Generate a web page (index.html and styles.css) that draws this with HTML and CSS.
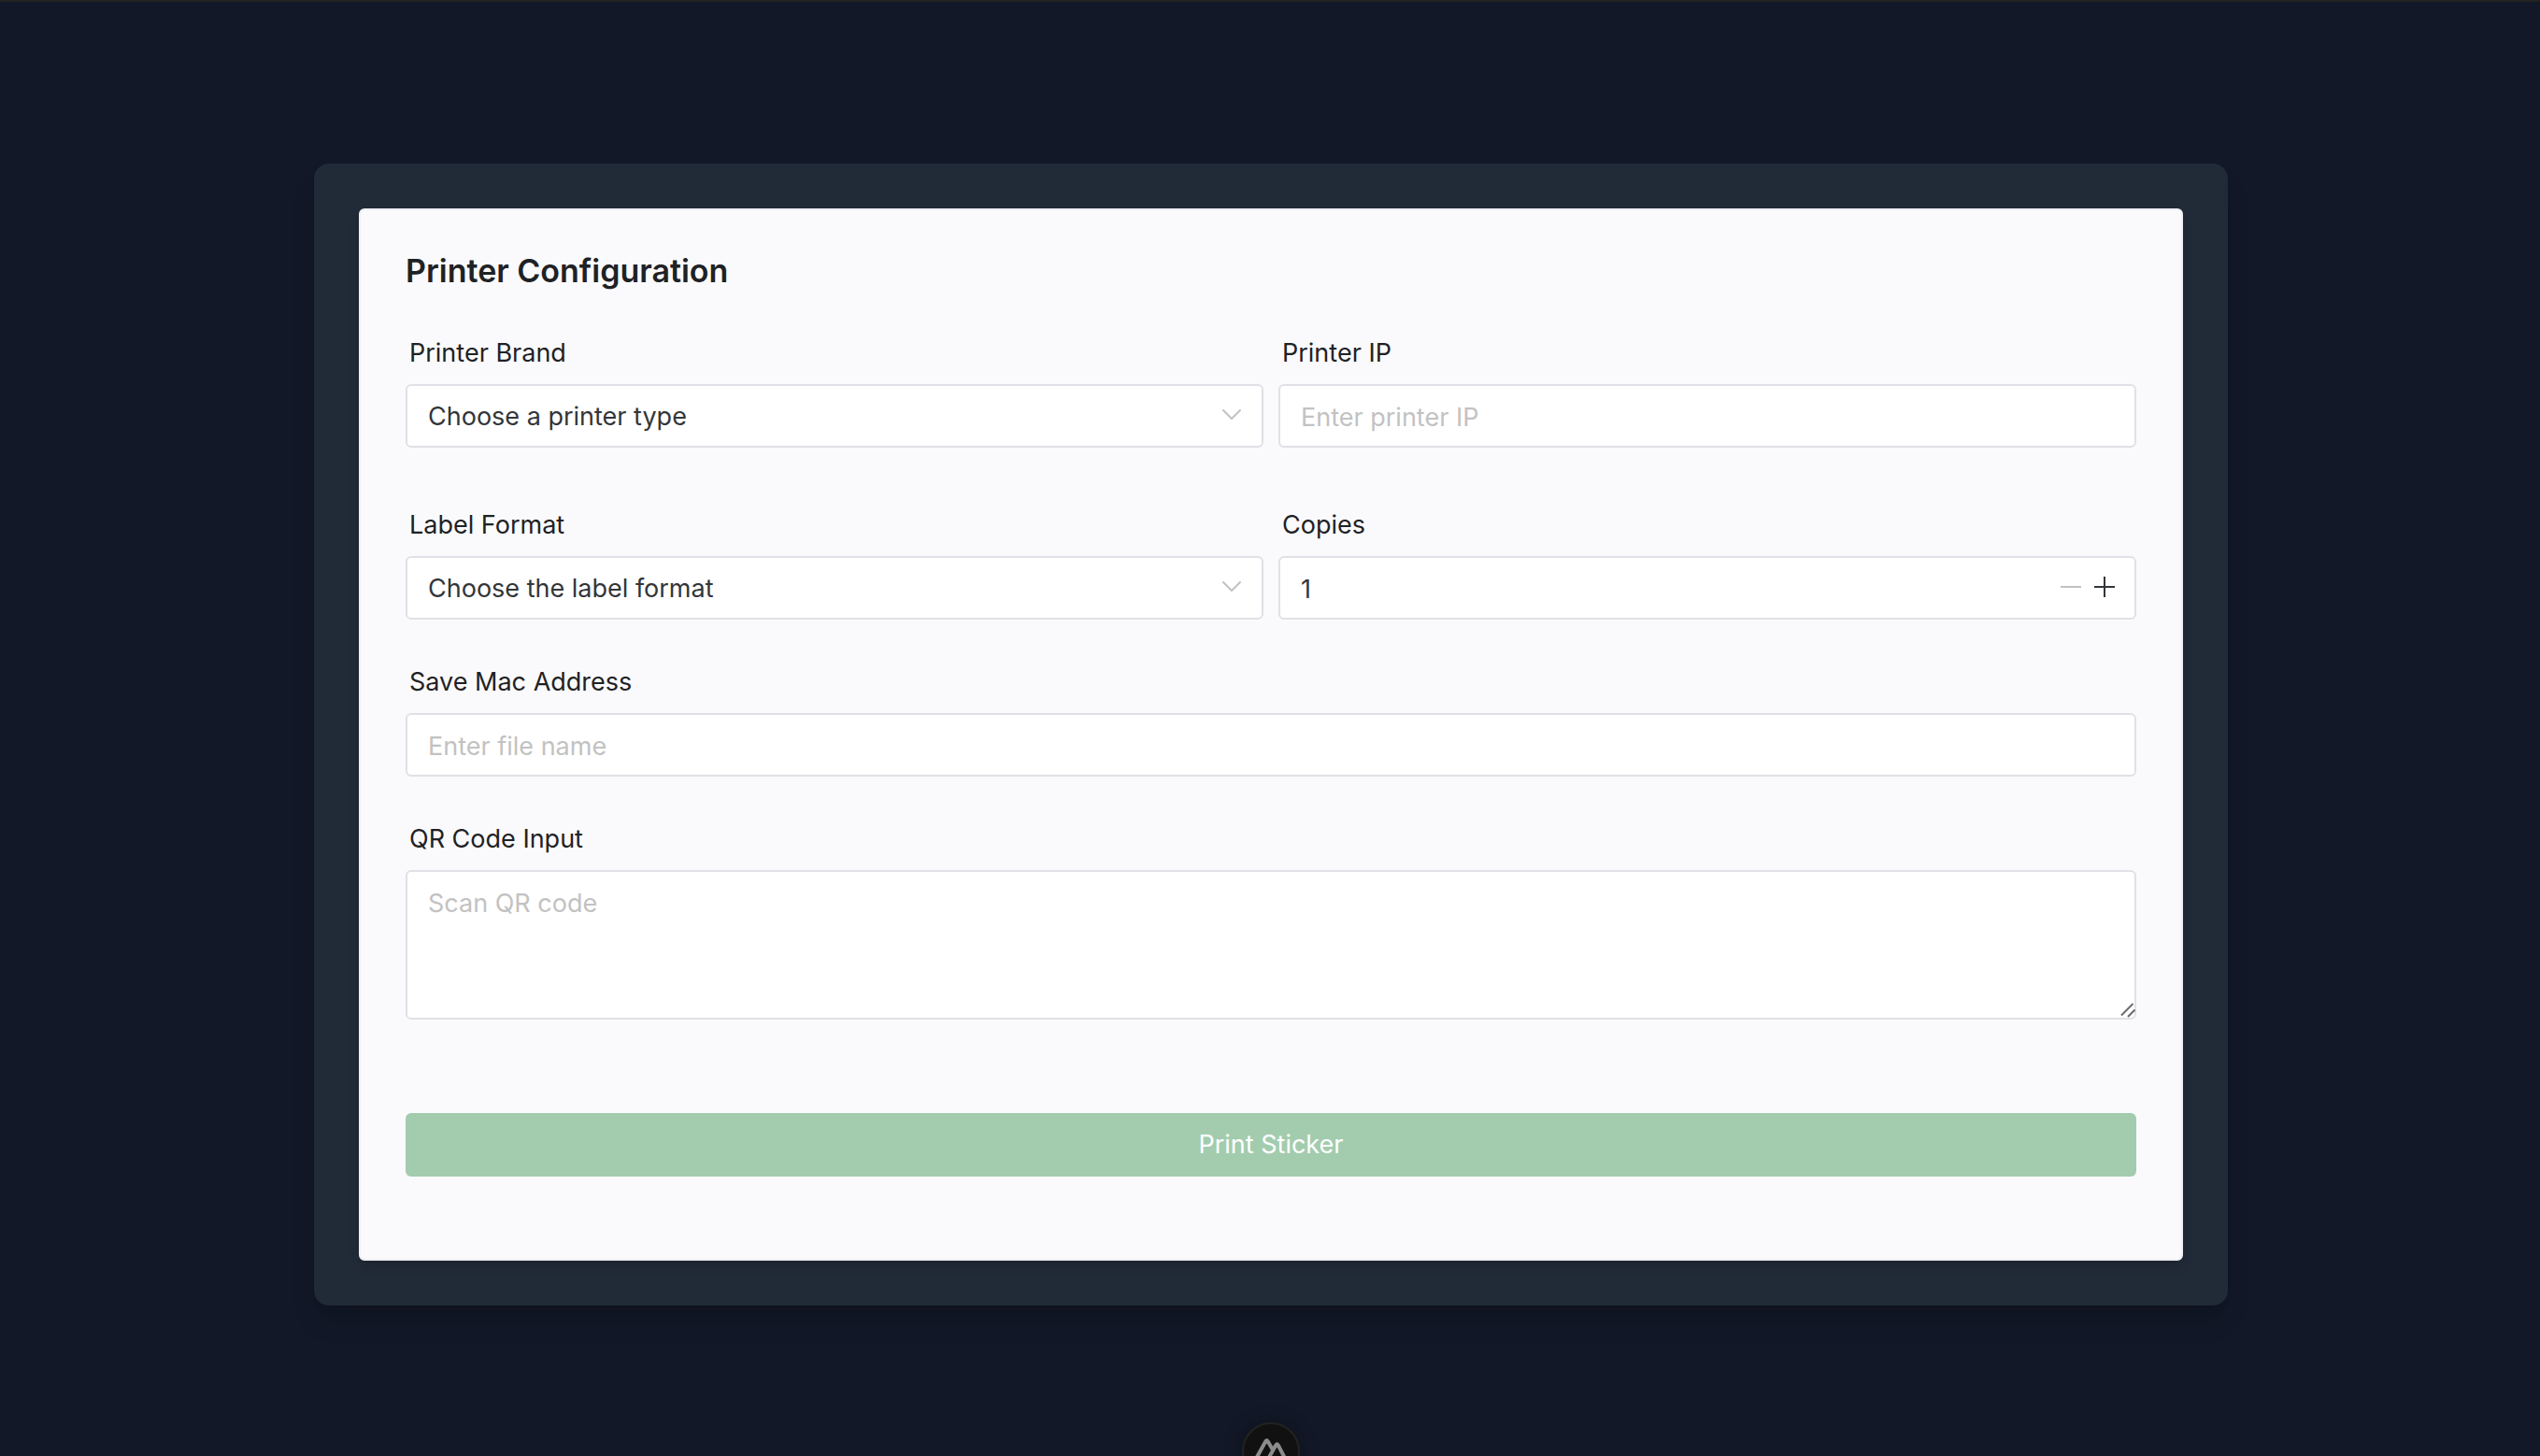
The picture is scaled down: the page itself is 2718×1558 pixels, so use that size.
FILE: index.html
```html
<!DOCTYPE html>
<html lang="en">
<head>
  <meta charset="utf-8">
  <meta name="viewport" content="width=device-width, initial-scale=1">
  <title>Printer Configuration</title>
  <link rel="stylesheet" href="styles.css">
</head>
<body>
  <main class="page">
    <div class="shell">
      <section class="card">
        <h1 class="card-title">Printer Configuration</h1>
        <form class="form">
          <div class="grid">
            <div class="field">
              <label class="label" for="brand">Printer Brand</label>
              <div class="control">
                <select class="input" id="brand">
                  <option>Choose a printer type</option>
                </select>
                <svg class="chevron" viewBox="0 0 32 32" aria-hidden="true"><path d="M7 12l9 9 9-9"/></svg>
              </div>
            </div>
            <div class="field">
              <label class="label" for="ip">Printer IP</label>
              <input class="input" id="ip" type="text" placeholder="Enter printer IP">
            </div>
            <div class="field">
              <label class="label" for="format">Label Format</label>
              <div class="control">
                <select class="input" id="format">
                  <option>Choose the label format</option>
                </select>
                <svg class="chevron" viewBox="0 0 32 32" aria-hidden="true"><path d="M7 12l9 9 9-9"/></svg>
              </div>
            </div>
            <div class="field">
              <label class="label" for="copies">Copies</label>
              <div class="control">
                <input class="input" id="copies" type="text" inputmode="numeric" value="1">
                <div class="stepper">
                  <button class="step" type="button" aria-label="Decrease copies" disabled>
                    <svg viewBox="0 0 28 28" aria-hidden="true"><path d="M3 14h22"/></svg>
                  </button>
                  <button class="step" type="button" aria-label="Increase copies">
                    <svg viewBox="0 0 28 28" aria-hidden="true"><path d="M3 14h22M14 3v22"/></svg>
                  </button>
                </div>
              </div>
            </div>
          </div>
          <div class="field">
            <label class="label" for="mac">Save Mac Address</label>
            <input class="input" id="mac" type="text" placeholder="Enter file name">
          </div>
          <div class="field">
            <label class="label" for="qr">QR Code Input</label>
            <div class="control">
              <textarea class="input input-area" id="qr" placeholder="Scan QR code"></textarea>
              <svg class="grip" viewBox="0 0 16 16" aria-hidden="true"><path d="M1 13.500L13.500 1M8 15L15.500 7.500"/></svg>
            </div>
          </div>
          <button class="submit" type="submit" disabled>Print Sticker</button>
        </form>
      </section>
    </div>
  </main>
  <button class="devtools" type="button" aria-label="Open devtools">
    <svg viewBox="0 0 36 32" aria-hidden="true"><path d="M18 25H3.500Q1.500 25 2.500 23L12.500 5Q13.500 3.500 14.500 5L20 14.500M13 25H31Q34 25 32.500 22.500L25.500 9Q24.500 7.500 23.500 9L14.500 25"/></svg>
  </button>
</body>
</html>
```

FILE: styles.css
```css
*,
*::before,
*::after {
  box-sizing: border-box;
}

body {
  margin: 0;
  min-height: 100vh;
  overflow: hidden;
  border-top: 2px solid #222320;
  background: #121827;
  color: #1f2225;
  font-family: Inter, "Noto Sans", sans-serif;
  font-size: 27px;
  line-height: 38px;
}

.page {
  padding: 173px 30px 0 32px;
}

.shell {
  max-width: 2048px;
  margin: 0 auto;
  padding: 48px;
  border-radius: 16px;
  background: #212a37;
  box-shadow: 0 20px 30px -6px rgba(0, 0, 0, 0.15), 0 8px 12px -8px rgba(0, 0, 0, 0.15);
}

.card {
  padding: 38px 48px 88px;
  border: 2px solid #efeff5;
  border-radius: 6px;
  background: #fafafc;
  box-shadow: 0 8px 12px -2px rgba(0, 0, 0, 0.15);
}

.card-title {
  margin: 0 0 42px;
  font-size: 34px;
  font-weight: 600;
  line-height: 54px;
}

.form {
  display: flex;
  flex-direction: column;
  gap: 48px;
}

.grid {
  display: grid;
  grid-template-columns: 1fr 1fr;
  gap: 64px 16px;
}

.label {
  display: block;
  padding: 0 0 14px 4px;
}

.control {
  position: relative;
}

.input {
  display: block;
  width: 100%;
  height: 68px;
  margin: 0;
  padding: 2px 22px 0;
  border: 2px solid #e0e0e6;
  border-radius: 6px;
  outline: none;
  background: #fff;
  color: #333639;
  font: inherit;
  line-height: 44px;
  appearance: none;
}

.input::placeholder {
  color: #c2c2c2;
  opacity: 1;
}

.input-area {
  height: 160px;
  padding: 12px 22px 10px;
  resize: none;
}

.chevron {
  position: absolute;
  top: 16px;
  right: 18px;
  width: 32px;
  height: 32px;
  fill: none;
  stroke: #c2c2c2;
  stroke-width: 2;
  stroke-linecap: round;
  stroke-linejoin: round;
  pointer-events: none;
}

.stepper {
  position: absolute;
  top: 0;
  right: 16px;
  display: flex;
  height: 66px;
}

.step {
  display: grid;
  place-items: center;
  width: 36px;
  padding: 0;
  border: 0;
  background: none;
  color: #333639;
}

.step:disabled {
  color: #c2c2c2;
}

.step svg {
  width: 28px;
  height: 28px;
  stroke: currentColor;
  stroke-width: 2;
}

.grip {
  position: absolute;
  right: 1px;
  bottom: 2px;
  width: 16px;
  height: 16px;
  fill: none;
  stroke: #6b6b6b;
  stroke-width: 2;
  pointer-events: none;
}

.submit {
  height: 68px;
  margin-top: 52px;
  padding: 0;
  border: 0;
  border-radius: 6px;
  background: #a3ccae;
  color: #fff;
  font: inherit;
}

.devtools {
  position: fixed;
  bottom: -26px;
  left: 50%;
  display: grid;
  place-items: center;
  width: 62px;
  height: 62px;
  margin-left: -30px;
  padding: 0;
  border: 2px solid #222320;
  border-radius: 50%;
  background: #111;
  box-shadow: 0 0 20px rgba(0, 0, 0, 0.3);
}

.devtools svg {
  width: 36px;
  height: 32px;
  fill: none;
  stroke: #8c8c8c;
  stroke-width: 4;
  stroke-linejoin: round;
}
```
